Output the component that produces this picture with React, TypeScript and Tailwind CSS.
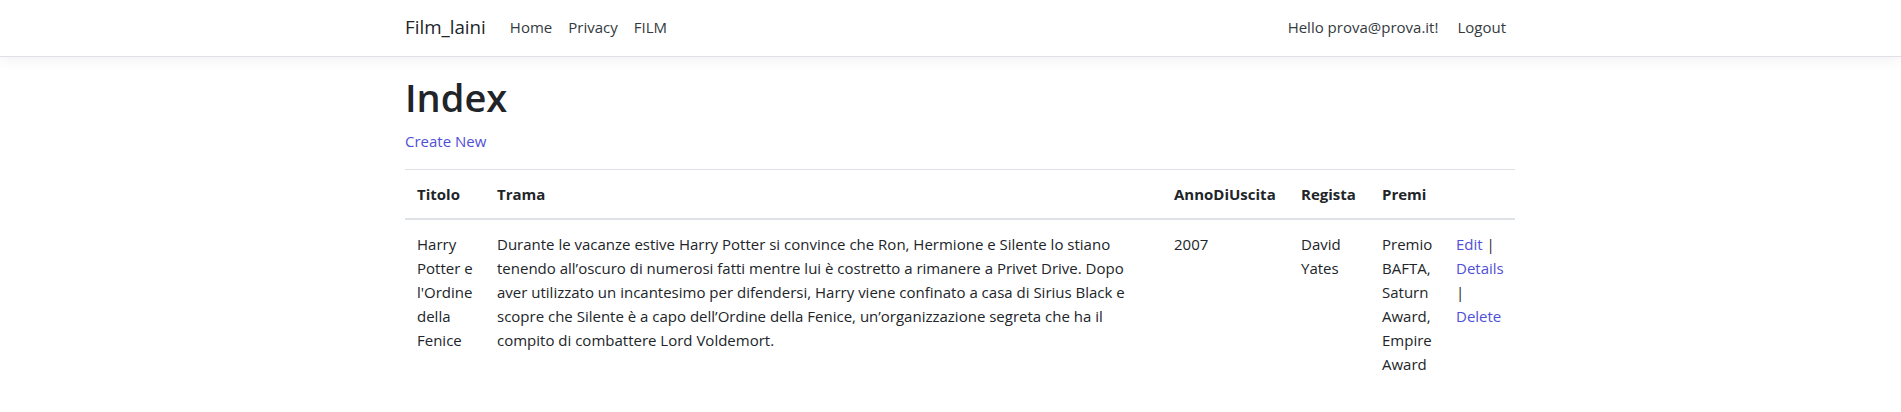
import React from "react";

const linkCls = "text-[#4f4fd8] hover:underline";

export default function App() {
  return (
    <div className="min-h-[412px] bg-white font-['Open_Sans',sans-serif] text-[15px] leading-6 text-[#212529]">
      <header className="mb-4 border-b border-[#dee2e6] bg-white shadow-[0_4px_12px_rgba(0,0,0,0.05)]">
        <div className="pl-[19px]">
          <nav className="mx-auto flex h-14 w-[1110px] items-center pb-[2px]">
            <a className="mr-4 text-[18.75px] leading-[30px] text-[#212529]">Film_laini</a>
            <ul className="flex items-center">
              <li><a className="px-2 text-[#343a40]">Home</a></li>
              <li><a className="px-2 text-[#343a40]">Privacy</a></li>
              <li><a className="px-2 text-[#343a40]">FILM</a></li>
            </ul>
            <ul className="ml-auto flex items-center">
              <li><a className="px-2 text-[#343a40]">Hello prova@prova.it!</a></li>
              <li><button className="pl-[11px] pr-[9px] text-[#343a40]">Logout</button></li>
            </ul>
          </nav>
        </div>
      </header>

      <div className="pl-[19px]">
        <main className="mx-auto w-[1110px]">
          <h1 className="mb-2 text-[38px] font-semibold leading-[48px]">Index</h1>
          <p className="mb-4">
            <a className={linkCls}>Create New</a>
          </p>
          <table className="w-full table-fixed border-collapse">
            <colgroup>
              <col className="w-[80px]" />
              <col className="w-[677px]" />
              <col className="w-[127px]" />
              <col className="w-[81px]" />
              <col className="w-[74px]" />
              <col className="w-[71px]" />
            </colgroup>
            <thead>
              <tr className="border-t border-[#dee2e6]">
                <th className="border-b-2 border-[#dee2e6] p-3 text-left align-bottom font-bold">Titolo</th>
                <th className="border-b-2 border-[#dee2e6] p-3 text-left align-bottom font-bold">Trama</th>
                <th className="border-b-2 border-[#dee2e6] p-3 text-left align-bottom font-bold">AnnoDiUscita</th>
                <th className="border-b-2 border-[#dee2e6] p-3 text-left align-bottom font-bold">Regista</th>
                <th className="border-b-2 border-[#dee2e6] p-3 text-left align-bottom font-bold">Premi</th>
                <th className="border-b-2 border-[#dee2e6] p-3 text-left align-bottom font-bold"></th>
              </tr>
            </thead>
            <tbody>
              <tr>
                <td className="p-3 align-top">Harry Potter e l'Ordine della Fenice</td>
                <td className="p-3 align-top">
                  Durante le vacanze estive Harry Potter si convince che Ron, Hermione e Silente lo stiano tenendo all’oscuro di numerosi fatti mentre lui è costretto a rimanere a Privet Drive. Dopo aver utilizzato un incantesimo per difendersi, Harry viene confinato a casa di Sirius Black e scopre che Silente è a capo dell’Ordine della Fenice, un’organizzazione segreta che ha il compito di combattere Lord Voldemort.
                </td>
                <td className="p-3 align-top">2007</td>
                <td className="p-3 align-top">David Yates</td>
                <td className="p-3 align-top">Premio BAFTA, Saturn Award, Empire Award</td>
                <td className="p-3 align-top">
                  <a className={linkCls}>Edit</a> | <a className={linkCls}>Details</a> | <a className={linkCls}>Delete</a>
                </td>
              </tr>
            </tbody>
          </table>
        </main>
      </div>
    </div>
  );
}
